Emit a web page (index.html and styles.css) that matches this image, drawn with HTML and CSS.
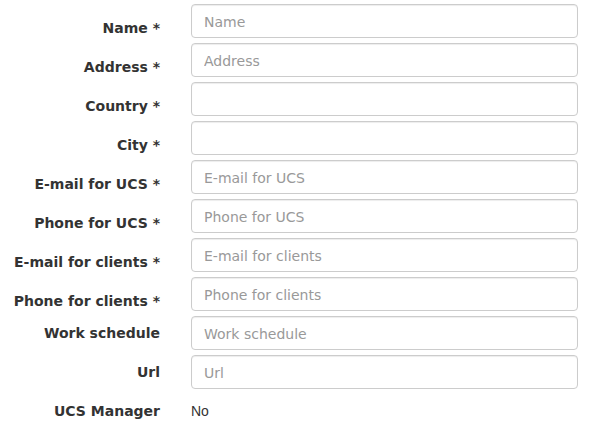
FILE: index.html
```html
<!DOCTYPE html>
<html>
<head>
<meta charset="utf-8">
<link rel="stylesheet" href="styles.css">
</head>
<body>
<form class="form">
  <div class="row req"><label class="label">Name *</label><input class="field" placeholder="Name"></div>
  <div class="row req"><label class="label">Address *</label><input class="field" placeholder="Address"></div>
  <div class="row req"><label class="label">Country *</label><input class="field"></div>
  <div class="row req"><label class="label">City *</label><input class="field"></div>
  <div class="row req"><label class="label">E-mail for UCS *</label><input class="field" placeholder="E-mail for UCS"></div>
  <div class="row req"><label class="label">Phone for UCS *</label><input class="field" placeholder="Phone for UCS"></div>
  <div class="row req"><label class="label">E-mail for clients *</label><input class="field" placeholder="E-mail for clients"></div>
  <div class="row req"><label class="label">Phone for clients *</label><input class="field" placeholder="Phone for clients"></div>
  <div class="row"><label class="label">Work schedule</label><input class="field" placeholder="Work schedule"></div>
  <div class="row"><label class="label">Url</label><input class="field" placeholder="Url"></div>
  <div class="row"><label class="label">UCS Manager</label><div class="static">No</div></div>
</form>
</body>
</html>
```
FILE: styles.css
```css
html, body {
  margin: 0;
  padding: 0;
  background: #fff;
}
.form {
  padding: 4px 12px 0 0;
  display: flex;
  flex-direction: column;
  gap: 5px;
}
.row {
  display: grid;
  grid-template-columns: 160px 1fr;
  column-gap: 31px;
  align-items: center;
  height: 34px;
}
.label {
  font-family: "DejaVu Sans", Verdana, sans-serif;
  font-weight: bold;
  font-size: 14px;
  color: #333;
  text-align: right;
  line-height: 18px;
  white-space: nowrap;
}
.row.req .label {
  position: relative;
  top: 7px;
}
.field {
  box-sizing: border-box;
  width: 387px;
  height: 34px;
  border: 1px solid #ccc;
  border-radius: 4px;
  padding: 2px 12px 0;
  font-family: "DejaVu Sans", Verdana, sans-serif;
  font-size: 14px;
  color: #555;
  outline: none;
  box-shadow: inset 0 1px 1px rgba(0,0,0,0.075);
}
.field::placeholder {
  color: #999;
}
.static {
  font-family: "Liberation Sans", Arial, sans-serif;
  font-size: 14px;
  color: #333;
}
```
